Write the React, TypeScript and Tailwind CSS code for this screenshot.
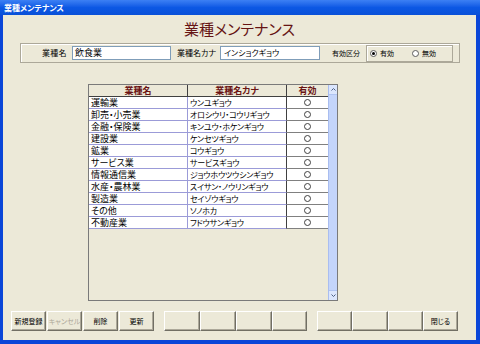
const rows = [
  ["運輸業", "ウンユギョウ"],
  ["卸売・小売業", "オロシウリ・コウリギョウ"],
  ["金融・保険業", "キンユウ・ホケンギョウ"],
  ["建設業", "ケンセツギョウ"],
  ["鉱業", "コウギョウ"],
  ["サービス業", "サービスギョウ"],
  ["情報通信業", "ジョウホウツウシンギョウ"],
  ["水産・農林業", "スイサン・ノウリンギョウ"],
  ["製造業", "セイゾウギョウ"],
  ["その他", "ソノホカ"],
  ["不動産業", "フドウサンギョウ"],
];

function Btn({ label, w, disabled }: { label?: string; w: string; disabled?: boolean }) {
  return (
    <div
      className={`${w} h-[20px] bg-[#ECE9D8] border border-t-white border-l-white border-r-[#716f64] border-b-[#716f64] shadow-[inset_-1px_-1px_0_#aca899] flex items-center justify-center text-[7px] leading-none ${
        disabled ? "text-[#aca899]" : "text-black"
      }`}
    >
      {label}
    </div>
  );
}

function Radio({ checked }: { checked?: boolean }) {
  return (
    <span className="shrink-0 w-[7px] h-[7px] rounded-full border border-[#5d5d5d] bg-white flex items-center justify-center">
      {checked && <span className="w-[3px] h-[3px] rounded-full bg-black" />}
    </span>
  );
}

export default function App() {
  return (
    <div className="w-[480px] h-[344px] bg-[#0a46d8] flex flex-col overflow-hidden font-['Noto_Sans_CJK_JP',sans-serif] [font-feature-settings:'palt']">
      <div className="h-[15px] shrink-0 bg-gradient-to-b from-[#3c80f4] via-[#0c58e4] to-[#0950d8] flex items-center pl-[4px]">
        <span className="text-white text-[8px] font-bold leading-none">業種メンテナンス</span>
      </div>
      <div className="flex-1 ml-[3px] mr-[4px] mb-[4px] bg-[#ECE9D8] flex flex-col">
        <div className="mt-[3px] h-[22px] text-center text-[15px] leading-[22px] text-[#661414]">
          業種メンテナンス
        </div>

        <div className="mt-[3px] ml-[17px] w-[440px] h-[20px] border border-[#aca899] shadow-[inset_1px_1px_0_#fff] flex items-center text-[8px] text-black whitespace-nowrap">
          <span className="shrink-0 w-[21px]" />
          <span className="shrink-0 w-[24px] tracking-[0.3px] leading-none">業種名</span>
          <span className="shrink-0 w-[6px]" />
          <div className="shrink-0 w-[99px] h-[14px] border border-[#7f9db9] bg-white text-[9px] leading-[12px] pl-[2px]">飲食業</div>
          <span className="shrink-0 w-[6px]" />
          <span className="shrink-0 w-[43px] leading-none">業種名カナ</span>
          <div className="shrink-0 w-[100px] h-[14px] border border-[#7f9db9] bg-white text-[8px] leading-[12px] pl-[3px]">インショクギョウ</div>
          <span className="shrink-0 w-[12px]" />
          <span className="shrink-0 w-[26px] text-[7px] leading-none">有効区分</span>
          <span className="shrink-0 w-[8px]" />
          <div className="shrink-0 w-[87px] h-[17px] border border-[#aca899] shadow-[inset_1px_1px_0_#fff] flex items-center pl-[3px] text-[7px]">
            <Radio checked />
            <span className="ml-[3px] w-[32px] leading-none">有効</span>
            <Radio />
            <span className="ml-[3px] leading-none">無効</span>
          </div>
        </div>

        <div className="mt-[21px] ml-[85px] w-[250px] h-[217px] border border-[#7a7a7a] flex">
          <div className="w-[239px] flex flex-col">
            <div className="flex h-[12px] border-b border-[#404040] text-[9px] font-bold text-[#6b1414] leading-[11px]">
              <div className="w-[99px] border-r border-[#404040] text-center">業種名</div>
              <div className="w-[99px] border-r border-[#404040] text-center">業種名カナ</div>
              <div className="w-[41px] text-center">有効</div>
            </div>
            {rows.map(([name, kana], i) => (
              <div key={i} className="flex h-[12px] leading-[11px] text-black">
                <div className="w-[99px] bg-white border-r border-b border-[#9b9bd8] pl-[2px] text-[9px] whitespace-nowrap overflow-hidden">{name}</div>
                <div className="w-[99px] bg-white border-b border-[#9b9bd8] border-r border-r-[#404040] pl-[2px] text-[8px] tracking-[-0.2px] whitespace-nowrap overflow-hidden">{kana}</div>
                <div className="w-[41px] bg-white border-b border-[#808080] flex items-center justify-center">
                  <span className="w-[7px] h-[7px] rounded-full border border-[#404040]" />
                </div>
              </div>
            ))}
          </div>
          <div className="w-[9px] flex flex-col bg-[#c4d5fb] border-l border-[#a9bdf0]">
            <div className="h-[10px] bg-[#dbe6fd] border-b border-[#b0c4f2] flex items-center justify-center">
              <svg width="5" height="3" viewBox="0 0 5 3"><path d="M0.5 2.5 L2.5 0.5 L4.5 2.5" stroke="#4d6185" fill="none" /></svg>
            </div>
            <div className="flex-1" />
            <div className="h-[10px] bg-[#dbe6fd] border-t border-[#b0c4f2] flex items-center justify-center">
              <svg width="5" height="3" viewBox="0 0 5 3"><path d="M0.5 0.5 L2.5 2.5 L4.5 0.5" stroke="#4d6185" fill="none" /></svg>
            </div>
          </div>
        </div>

        <div className="mt-[10px] h-[20px] flex ml-[8px]">
          <div className="flex gap-[1px]">
            <Btn w="w-[35px]" label="新規登録" />
            <Btn w="w-[35px]" label="キャンセル" disabled />
            <Btn w="w-[35px]" label="削除" />
            <Btn w="w-[35px]" label="更新" />
          </div>
          <div className="flex ml-[10px]">
            <Btn w="w-[36px]" />
            <Btn w="w-[36px]" />
            <Btn w="w-[36px]" />
            <Btn w="w-[35px]" />
          </div>
          <div className="flex ml-[10px]">
            <Btn w="w-[35px]" />
            <Btn w="w-[36px]" />
            <Btn w="w-[35px]" />
            <Btn w="w-[35px]" label="閉じる" />
          </div>
        </div>
      </div>
    </div>
  );
}
